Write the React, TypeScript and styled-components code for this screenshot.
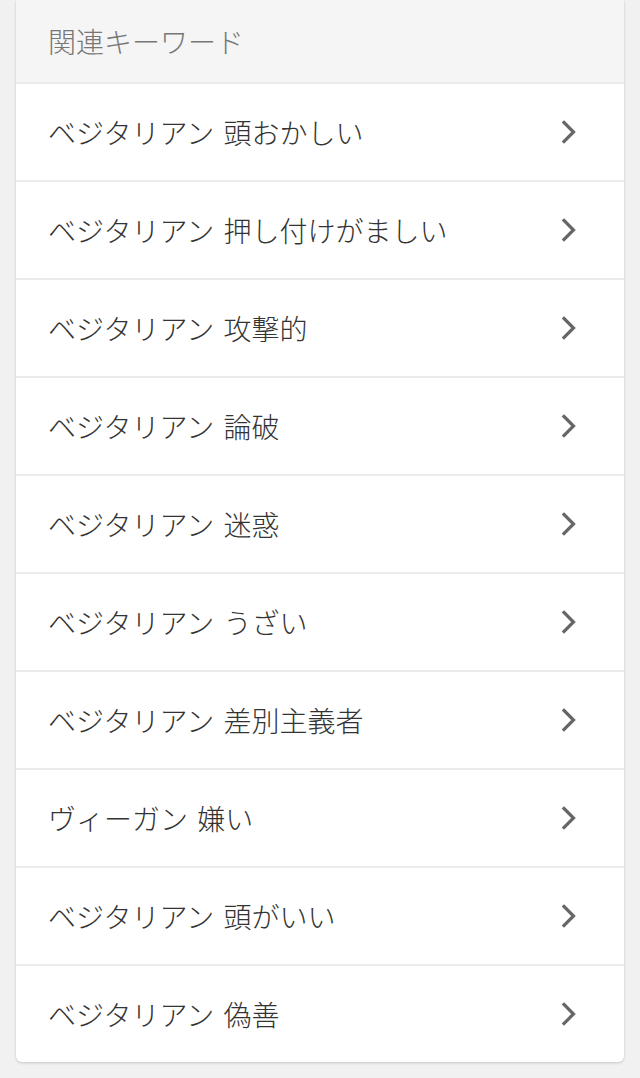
import React from "react";
import styled, { createGlobalStyle } from "styled-components";

const GlobalStyle = createGlobalStyle`
  html, body {
    margin: 0;
    padding: 0;
    background: #f1f1f1;
    font-family: "Noto Sans CJK JP", "Noto Sans", sans-serif;
  }
`;

const keywords = [
  "ベジタリアン 頭おかしい",
  "ベジタリアン 押し付けがましい",
  "ベジタリアン 攻撃的",
  "ベジタリアン 論破",
  "ベジタリアン 迷惑",
  "ベジタリアン うざい",
  "ベジタリアン 差別主義者",
  "ヴィーガン 嫌い",
  "ベジタリアン 頭がいい",
  "ベジタリアン 偽善",
];

const Page = styled.div`
  padding: 0 16px 16px;
`;

const Card = styled.section`
  background: #fff;
  border-radius: 0 0 6px 6px;
  box-shadow: 0 1px 3px rgba(0, 0, 0, 0.18);
  overflow: hidden;
`;

const Header = styled.h2`
  margin: 0;
  height: 82px;
  display: flex;
  align-items: center;
  padding: 0 32px;
  background: #f5f5f5;
  color: #777;
  font-size: 28px;
  font-weight: 300;
  border-bottom: 2px solid #ebebeb;
`;

const List = styled.ul`
  list-style: none;
  margin: 0;
  padding: 0;
`;

const Row = styled.li<{ $last?: boolean }>`
  height: 96px;
  display: flex;
  align-items: center;
  justify-content: space-between;
  padding: 0 47px 0 32px;
  border-bottom: ${(p) => (p.$last ? "none" : "2px solid #ebebeb")};
  color: #333;
  font-size: 28px;
  font-weight: 300;
  word-spacing: 3px;
`;

const Chevron = () => (
  <svg width="16" height="24" viewBox="0 0 16 24" fill="none">
    <path d="M3 2.5 L12.5 12 L3 21.5" stroke="#666" strokeWidth="3.2" strokeLinecap="square" />
  </svg>
);

export default function App() {
  return (
    <Page>
      <GlobalStyle />
      <Card>
        <Header>関連キーワード</Header>
        <List>
          {keywords.map((k, i) => (
            <Row key={k} $last={i === keywords.length - 1}>
              <span>{k}</span>
              <Chevron />
            </Row>
          ))}
        </List>
      </Card>
    </Page>
  );
}
